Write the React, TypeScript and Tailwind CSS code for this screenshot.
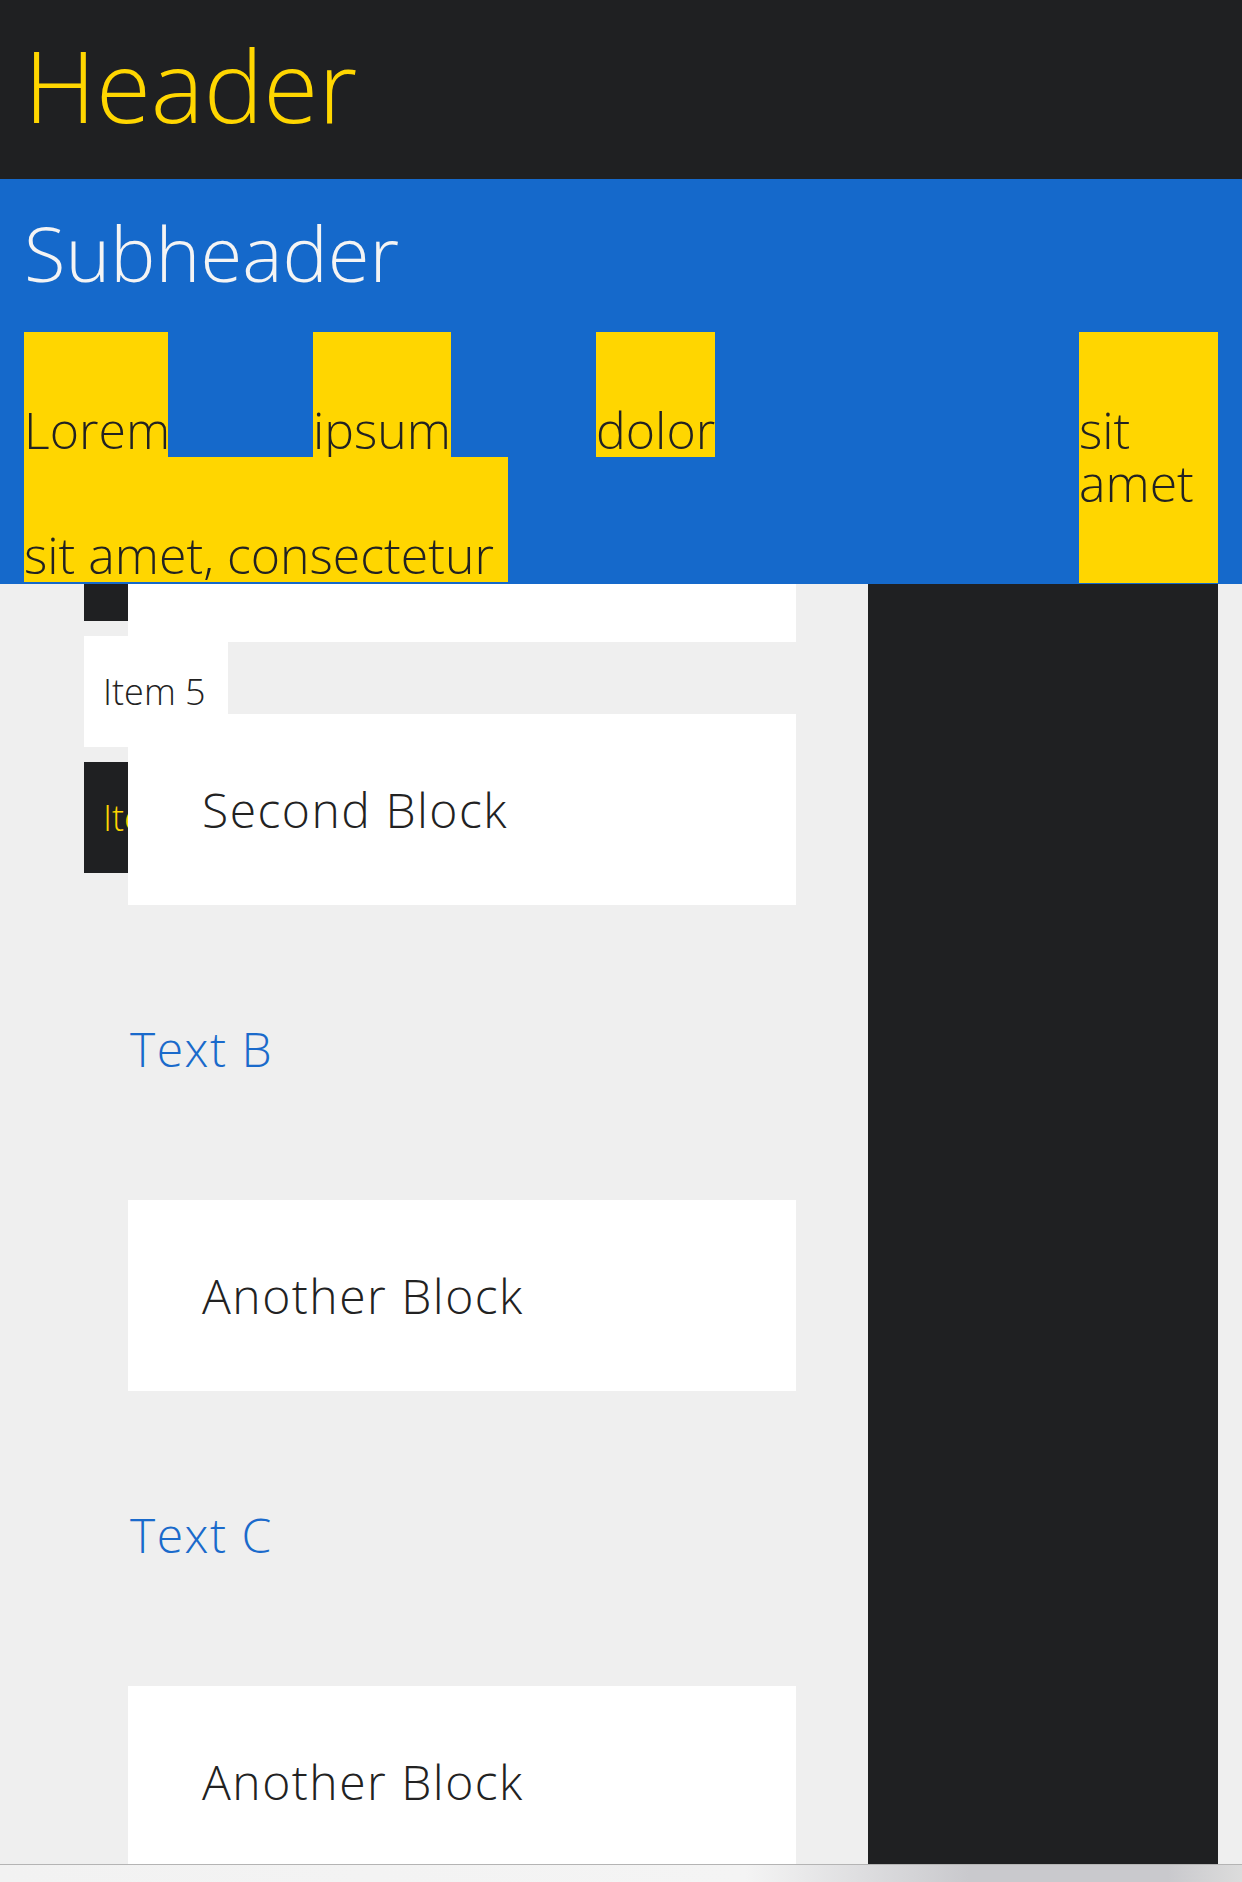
import React from "react";

const font = { fontFamily: '"Open Sans", "Liberation Sans", sans-serif' };

function Chip({ text, className = "" }: { text: string; className?: string }) {
  return (
    <div className={`bg-[#ffd600] pt-[72px] text-[50px] font-light leading-[53px] text-[#222] whitespace-nowrap ${className}`}>
      {text}
    </div>
  );
}

function Block({ label }: { label: string }) {
  return (
    <div className="flex h-[191px] items-center bg-white pl-[74px] text-[48px] font-light leading-none tracking-[1.5px] text-[#222]">
      {label}
    </div>
  );
}

function Caption({ label }: { label: string }) {
  return (
    <div className="h-[295px] pt-[120px] pl-[2px] text-[48px] font-light leading-none tracking-[1.5px] text-[#1a6acb]">
      {label}
    </div>
  );
}

export default function App() {
  return (
    <div className="flex h-[1882px] w-[1242px] flex-col overflow-hidden bg-[#efefef]" style={font}>
      {/* header */}
      <header className="relative z-20 h-[179px] shrink-0 bg-[#1f2022] pl-[24px] pt-[34px]">
        <h1 className="text-[100px] font-light leading-none text-[#ffd600]">Header</h1>
      </header>

      {/* subheader */}
      <section className="relative z-20 h-[405px] shrink-0 bg-[#1569cb] px-[24px] pt-[36px]">
        <h2 className="text-[76px] font-light leading-none text-[#f4f4f4]">Subheader</h2>
        <div className="mt-[41px] flex justify-between">
          <div className="flex flex-col">
            <div className="flex gap-[145px]">
              <Chip text="Lorem" className="w-[144px]" />
              <Chip text="ipsum" className="w-[138px]" />
              <Chip text="dolor" className="w-[119px]" />
            </div>
            <Chip text="sit amet, consectetur" className="w-[484px]" />
          </div>
          <div className="w-[139px] bg-[#ffd600] pt-[72px] pb-[73px] text-[50px] font-light leading-[53px] text-[#222]">
            sit amet
          </div>
        </div>
      </section>

      {/* main */}
      <main className="relative flex min-h-0 flex-1 overflow-hidden">
        {/* side list, partly scrolled under the subheader */}
        <div className="absolute left-[84px] top-[-74px] flex w-[144px] flex-col gap-[15px] text-[36px] font-light leading-none">
          <div className="h-[111px] bg-[#1f2022]" />
          <div className="flex h-[111px] items-center bg-white pl-[19px] text-[#222]">Item 5</div>
          <div className="flex h-[111px] items-center bg-[#1f2022] pl-[19px] text-[#ffd600]">Item 6</div>
        </div>

        <div className="relative z-10 w-[868px] shrink-0 pl-[128px]">
          <div className="w-[668px]">
            <div className="h-[58px] bg-white" />
            <div className="mt-[72px]">
              <Block label="Second Block" />
            </div>
            <Caption label="Text B" />
            <Block label="Another Block" />
            <Caption label="Text C" />
            <Block label="Another Block" />
          </div>
        </div>
        <aside className="w-[350px] shrink-0 bg-[#1f2022]" />
      </main>

      {/* bottom bar */}
      <div className="h-[18px] shrink-0 border-t border-[#b4b4b4] bg-[linear-gradient(90deg,#f2f2f2_0%,#f4f4f4_60%,#c9c9cd_78%,#c9c9cd_94%,#dcdcdc_100%)]" />
    </div>
  );
}
